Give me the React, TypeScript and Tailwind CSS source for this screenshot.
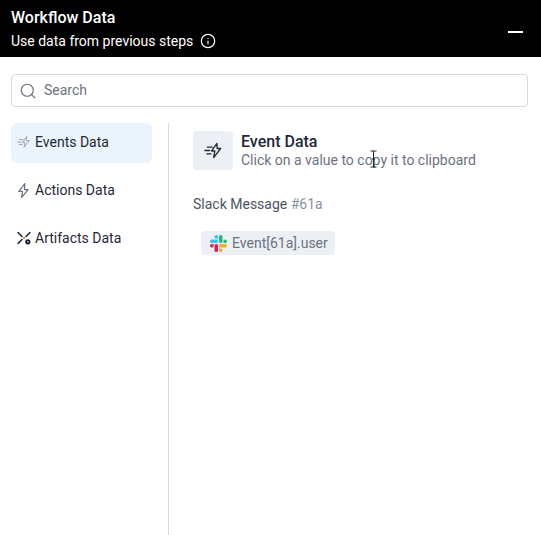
import { Info, Search } from "lucide-react";

function Fast({ className, color = "#374151" }: { className?: string; color?: string }) {
  return (
    <svg viewBox="0 0 20 20" fill="none" stroke={color} strokeWidth="1.4" strokeLinejoin="round" strokeLinecap="round" className={className}>
      <path d="M13.6 2.5 8 10.5h3.4l-1.2 7 7.3-9.6h-3.6z" />
      <path d="M3.5 6.5h5M1 10h5M3 13.5h4.5" />
    </svg>
  );
}

function Bolt() {
  return (
    <svg viewBox="0 0 14 18" fill="none" stroke="#6b7280" strokeWidth="1.3" strokeLinejoin="round" className="w-[13px] h-[17px]">
      <path d="M8.5 1.5 2 10h4l-1 6.5L12 8H8z" />
    </svg>
  );
}

function Artifacts() {
  return (
    <svg viewBox="0 0 14 14" fill="none" className="w-[14px] h-[14px]">
      <path d="M1 1.5 5 5.5M13 1.5 9 5.5M1 12.5l4-4" stroke="#111827" strokeWidth="1.4" strokeLinecap="round" />
      <circle cx="7" cy="7" r="0.9" fill="#ea580c" />
      <circle cx="10.8" cy="10.8" r="2.6" fill="#111827" />
      <circle cx="10.8" cy="10.8" r="0.8" fill="#fff" />
    </svg>
  );
}

function Slack() {
  return (
    <svg viewBox="0 0 122.8 122.8" className="w-[17px] h-[17px]">
      <path d="M25.8 77.6c0 7.1-5.8 12.9-12.9 12.9S0 84.7 0 77.6s5.8-12.9 12.9-12.9h12.9zM32.3 77.6c0-7.1 5.8-12.9 12.9-12.9s12.9 5.8 12.9 12.9v32.3c0 7.1-5.8 12.9-12.9 12.9s-12.9-5.8-12.9-12.9z" fill="#e01e5a" />
      <path d="M45.2 25.8c-7.1 0-12.9-5.8-12.9-12.9S38.1 0 45.2 0s12.9 5.8 12.9 12.9v12.9zM45.2 32.3c7.1 0 12.9 5.8 12.9 12.9s-5.8 12.9-12.9 12.9H12.9C5.8 58.1 0 52.3 0 45.2s5.8-12.9 12.9-12.9z" fill="#36c5f0" />
      <path d="M97 45.2c0-7.1 5.8-12.9 12.9-12.9s12.9 5.8 12.9 12.9-5.8 12.9-12.9 12.9H97zM90.5 45.2c0 7.1-5.8 12.9-12.9 12.9s-12.9-5.8-12.9-12.9V12.9C64.7 5.8 70.5 0 77.6 0s12.9 5.8 12.9 12.9z" fill="#2eb67d" />
      <path d="M77.6 97c7.1 0 12.9 5.8 12.9 12.9s-5.8 12.9-12.9 12.9-12.9-5.8-12.9-12.9V97zM77.6 90.5c-7.1 0-12.9-5.8-12.9-12.9s5.8-12.9 12.9-12.9h32.3c7.1 0 12.9 5.8 12.9 12.9s-5.8 12.9-12.9 12.9z" fill="#ecb22e" />
    </svg>
  );
}

export default function App() {
  return (
    <div className="w-[541px] h-[535px] bg-white flex flex-col overflow-hidden font-['Roboto',sans-serif] relative">
      <header className="h-[57px] bg-black text-white pl-[11px] pr-[18px] pt-[8px] flex justify-between shrink-0">
        <div>
          <div className="text-[16px] leading-[20px] font-medium">Workflow Data</div>
          <div className="mt-[3px] text-[14px] leading-[20px] flex items-center gap-[7px]">
            Use data from previous steps
            <Info size={16} strokeWidth={1.75} />
          </div>
        </div>
        <div className="w-[15px] h-[2px] bg-white mt-[23px]" />
      </header>

      <div className="ml-[11px] mr-[13px] mt-[17px] h-[33px] border border-[#d9dbde] rounded-[4px] flex items-center pl-[7px] gap-[7px] shrink-0">
        <Search size={18} strokeWidth={1.5} color="#6b7280" />
        <span className="text-[14px] text-[#6b7280]">Search</span>
      </div>

      <div className="flex flex-1 mt-[16px] min-h-0">
        <nav className="w-[168px] shrink-0 pl-[11px] pr-[16px] flex flex-col gap-[8px]">
          <div className="h-[40px] rounded-[6px] bg-[#ebf3fc] flex items-center pb-[2px] pl-[6px] gap-[4px] text-[14px] text-[#1f2937]">
            <Fast className="w-[14px] h-[14px]" color="#9ca3af" />
            <span>Events Data</span>
          </div>
          <div className="h-[40px] flex items-center pb-[2px] pl-[6px] gap-[5px] text-[14px] text-[#1f2937]">
            <Bolt />
            <span>Actions Data</span>
          </div>
          <div className="h-[40px] flex items-center pb-[2px] pl-[6px] gap-[4px] text-[14px] text-[#1f2937]">
            <Artifacts />
            <span>Artifacts Data</span>
          </div>
        </nav>

        <div className="w-px bg-[#d9dbde]" />

        <main className="flex-1 pl-[24px] pt-[8px]">
          <div className="flex items-center gap-[8px]">
            <div className="w-[40px] h-[39px] rounded-[4px] bg-[#eceff4] flex items-center justify-center">
              <Fast className="w-[19px] h-[19px]" color="#1f2937" />
            </div>
            <div className="-mt-[1px]">
              <div className="text-[16px] leading-[19px] font-medium text-[#1f2937]">Event Data</div>
              <div className="text-[14px] leading-[18px] text-[#6b7280]">Click on a value to copy it to clipboard</div>
            </div>
          </div>
          <div className="mt-[24px] text-[14px] leading-[20px] text-[#4b5563]">
            Slack Message <span className="text-[#8b929c]">#61a</span>
          </div>
          <div className="mt-[17px] ml-[8px] inline-flex items-center h-[24px] rounded-[4px] bg-[#eceff4] pl-[9px] pr-[7px] gap-[5px] text-[14px] text-[#6b7280]">
            <Slack />
            Event[61a].user
          </div>
        </main>
      </div>

      <div className="absolute left-[370px] top-[150px] w-[7px] h-[18px]" aria-hidden>
        <svg viewBox="0 0 7 18" className="w-[7px] h-[18px]" fill="none" stroke="#222" strokeWidth="1">
          <path d="M0.5 1H3.5V17H0.5M6.5 1H3.5M6.5 17H3.5M2 9H5" />
        </svg>
      </div>
    </div>
  );
}
